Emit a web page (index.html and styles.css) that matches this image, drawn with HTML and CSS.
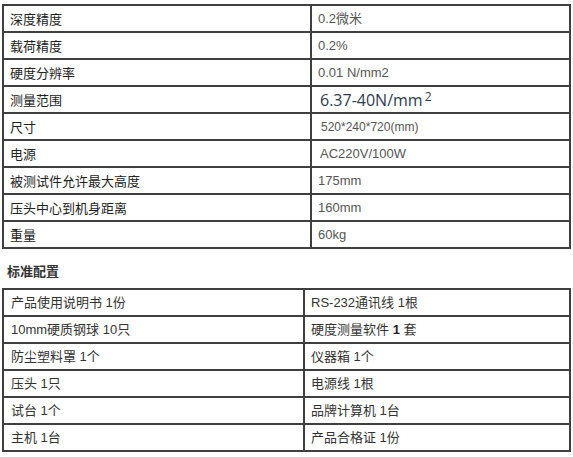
FILE: index.html
```html
<!DOCTYPE html>
<html lang="zh">
<head>
<meta charset="utf-8">
<link rel="stylesheet" href="styles.css">
</head>
<body>
<div class="wrap">
  <table class="grid spec">
    <colgroup><col class="c1"><col class="c2"></colgroup>
    <tr><td class="lab">深度精度</td><td class="val">0.2微米</td></tr>
    <tr><td class="lab">载荷精度</td><td class="val">0.2%</td></tr>
    <tr><td class="lab">硬度分辨率</td><td class="val">0.01 N/mm2</td></tr>
    <tr><td class="lab">测量范围</td><td class="val big">6.37-40N/mm<sup>2</sup></td></tr>
    <tr><td class="lab">尺寸</td><td class="val small in4">520*240*720(mm)</td></tr>
    <tr><td class="lab">电源</td><td class="val in2">AC220V/100W</td></tr>
    <tr><td class="lab">被测试件允许最大高度</td><td class="val">175mm</td></tr>
    <tr><td class="lab">压头中心到机身距离</td><td class="val">160mm</td></tr>
    <tr><td class="lab">重量</td><td class="val">60kg</td></tr>
  </table>
  <h3 class="title">标准配置</h3>
  <table class="grid config">
    <colgroup><col class="d1"><col class="d2"></colgroup>
    <tr><td class="item">产品使用说明书 1份</td><td class="item r">RS-232通讯线 1根</td></tr>
    <tr><td class="item">10mm硬质钢球 10只</td><td class="item r">硬度测量软件 <b>1</b> 套</td></tr>
    <tr><td class="item">防尘塑料罩 1个</td><td class="item r">仪器箱 1个</td></tr>
    <tr><td class="item">压头 1只</td><td class="item r">电源线 1根</td></tr>
    <tr><td class="item">试台 1个</td><td class="item r">品牌计算机 1台</td></tr>
    <tr><td class="item">主机 1台</td><td class="item r">产品合格证 1份</td></tr>
  </table>
</div>
</body>
</html>
```
FILE: styles.css
```css
html, body {
  margin: 0;
  padding: 0;
  background: #ffffff;
}
.wrap {
  padding: 4px 0 0 2px;
  font-family: "Liberation Sans", "Noto Sans CJK SC", sans-serif;
}
.grid {
  border-collapse: collapse;
  table-layout: fixed;
  width: 567px;
}
.grid td {
  border: 2px solid #3f3f3f;
  height: 25px;
  padding: 0;
  vertical-align: middle;
  white-space: nowrap;
  line-height: 16px;
}
.c1 { width: 308px; }
.c2 { width: 259px; }
.d1 { width: 301px; }
.d2 { width: 266px; }
.lab {
  padding-left: 6px !important;
  font-family: "Noto Sans CJK SC", sans-serif;
  font-size: 13px;
  color: #222222;
}
.val {
  padding-left: 6px !important;
  font-size: 13px;
  color: #555555;
}
.val.in2 { padding-left: 8px !important; }
.val.in4 { padding-left: 9px !important; }
.val.small { font-size: 12px; }
.val.big {
  padding-left: 8px !important;
  font-family: "Open Sans", sans-serif;
  font-size: 16px;
  color: #2d3b52;
}
.val.big sup {
  font-size: 12px;
  position: relative;
  top: -1px;
  vertical-align: top;
  margin-left: 2px;
  line-height: 12px;
}
.title {
  margin: 13px 0 8px 5px;
  font-family: "Noto Sans CJK SC", sans-serif;
  font-size: 13px;
  line-height: 18px;
  font-weight: bold;
  color: #333333;
}
.item {
  padding-left: 7px !important;
  font-family: "Liberation Sans", "Noto Sans CJK SC", sans-serif;
  font-size: 13px;
  color: #333333;
}
.item.r { padding-left: 6px !important; }
.item b { font-weight: bold; color: #222; }
```
